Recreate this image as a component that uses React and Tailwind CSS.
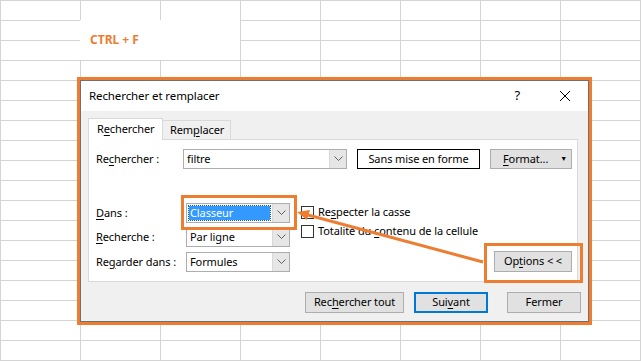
import React from 'react'

const FONT = { fontFamily: '"Segoe UI", "Noto Sans", sans-serif' }

function U({ children }) {
    return <span className="underline underline-offset-[2px] decoration-[1px]">{children}</span>
}

function Chevron() {
    return (
        <svg width="9" height="6" viewBox="0 0 9 6" className="text-[#606060]">
            <path d="M0.5 0.5 L4.5 4.5 L8.5 0.5" fill="none" stroke="currentColor" strokeWidth="1" />
        </svg>
    )
}

function Combo({ width, children, selected = false }) {
    return (
        <div className={`flex h-[20px] border border-[#adadad] bg-white ${width}`}>
            <div className="flex flex-1 items-center px-[2px]">
                {selected ? (
                    <span className="flex h-[14px] w-full items-center bg-[#3399ff] px-[1px] text-white outline outline-1 outline-dotted outline-[#1a5fb4]">
                        {children}
                    </span>
                ) : (
                    <span className="pl-[1px]">{children}</span>
                )}
            </div>
            <div className="flex w-[17px] items-center justify-center border-l border-[#d9d9d9] bg-[#e6e6e6]">
                <Chevron />
            </div>
        </div>
    )
}

function Checkbox({ children }) {
    return (
        <div className="flex h-[19px] items-center whitespace-nowrap">
            <div className="h-[13px] w-[13px] border border-[#333] bg-white" />
            <span className="ml-[4px]">{children}</span>
        </div>
    )
}

function Button({ className = '', children }) {
    return (
        <div className={`flex h-[21px] items-center justify-center border border-[#adadad] bg-[#e1e1e1] ${className}`}>
            {children}
        </div>
    )
}

export default function App() {
    const cells = Array.from({ length: 9 * 19 })

    return (
        <div className="relative h-[361px] w-[641px] overflow-hidden bg-white text-[11px] tracking-[-0.1px] text-black" style={FONT}>
            {/* spreadsheet grid */}
            <div className="grid grid-cols-[repeat(9,80px)] auto-rows-[20px]">
                {cells.map((_, i) => (
                    <div key={i} className="border-l border-t border-[#d4d4d4]" />
                ))}
            </div>

            {/* merged cell with shortcut */}
            <div className="absolute left-[80px] top-[20px] flex h-[40px] w-[160px] items-center bg-white pl-[10px] text-[12px] font-bold tracking-normal text-[#ed7d31]">
                CTRL + F
            </div>

            {/* dialog window */}
            <div className="absolute left-[77px] top-[77px] w-[515px] whitespace-nowrap border-[3px] border-[#ed7d31]">
                <div className="flex flex-col border border-[#707070]">
                    <div className="flex h-[30px] items-center bg-white pl-[8px]">
                        <span className="text-[11.5px]">Rechercher et remplacer</span>
                        <span className="ml-auto mr-[39px] text-[13px]">?</span>
                        <svg width="12" height="12" viewBox="0 0 12 12" className="mr-[17px]">
                            <path d="M1 1 L11 11 M11 1 L1 11" stroke="#000" strokeWidth="1" />
                        </svg>
                    </div>

                    <div className="flex flex-col bg-[#f0f0f0] px-[7px] pb-[8px] pt-[7px]">
                        <div className="flex h-[21px] items-end">
                            <div className="relative z-10 -mb-px flex h-[22px] w-[75px] items-center border border-b-0 border-[#d9d9d9] bg-white pl-[8px]">
                                R<U>e</U>chercher
                            </div>
                            <div className="flex h-[19px] w-[68px] items-center border border-l-0 border-b-0 border-[#d9d9d9] pl-[7px]">
                                Rem<U>p</U>lacer
                            </div>
                        </div>

                        <div className="flex h-[143px] w-[490px] flex-col border border-[#d9d9d9] bg-white pl-[7px] pt-[9px]">
                            <div className="flex h-[20px] items-center">
                                <span className="w-[87px]">Re<U>c</U>hercher :</span>
                                <Combo width="w-[164px]">filtre</Combo>
                                <div className="ml-[10px] flex h-[20px] w-[123px] items-center justify-center border border-black">
                                    Sans mise en forme
                                </div>
                                <div className="ml-[10px] flex h-[20px] w-[82px] items-center border border-[#adadad] bg-[#e1e1e1] pl-[12px]">
                                    <span><U>F</U>ormat...</span>
                                    <span className="ml-auto mr-[4px] text-[7px]">▼</span>
                                </div>
                            </div>

                            <div className="mt-[34px] flex">
                                <div className="flex flex-col">
                                    <div className="flex h-[20px] items-center">
                                        <span className="w-[90px]"><U>D</U>ans :</span>
                                        <Combo width="w-[104px]" selected>Classeur</Combo>
                                    </div>
                                    <div className="mt-[4px] flex h-[20px] items-center">
                                        <span className="w-[90px]"><U>R</U>echerche :</span>
                                        <Combo width="w-[104px]">Par ligne</Combo>
                                    </div>
                                    <div className="mt-[5px] flex h-[20px] items-center">
                                        <span className="w-[90px]">Re<U>g</U>arder dans :</span>
                                        <Combo width="w-[104px]">Formules</Combo>
                                    </div>
                                </div>
                                <div className="ml-[11px] flex flex-col">
                                    <Checkbox>Re<U>s</U>pecter la casse</Checkbox>
                                    <Checkbox>Totalité du <U>c</U>ontenu de la cellule</Checkbox>
                                </div>
                                <div className="ml-auto mr-[5px] flex flex-col justify-end">
                                    <Button className="w-[78px]">Op<U>t</U>ions &lt; &lt;</Button>
                                </div>
                            </div>
                        </div>

                        <div className="mt-[10px] flex justify-end">
                            <Button className="w-[99px]">Rec<U>h</U>ercher tout</Button>
                            <div className="ml-[10px] flex h-[21px] w-[74px] items-center justify-center border-2 border-[#0078d7] bg-[#e1e1e1]">
                                Sui<U>v</U>ant
                            </div>
                            <Button className="ml-[19px] w-[74px]">Fermer</Button>
                        </div>
                    </div>
                </div>
            </div>

            {/* annotations */}
            <div className="absolute left-[181px] top-[195px] h-[35px] w-[116px] border-[3px] border-[#ed7d31]" />
            <div className="absolute left-[484px] top-[243px] h-[40px] w-[99px] border-[3px] border-[#ed7d31]" />
            <svg className="pointer-events-none absolute left-0 top-0" width="641" height="361">
                <line x1="483" y1="262" x2="308" y2="215" stroke="#ed7d31" strokeWidth="3" />
                <polygon points="297,212 310,210 307,220" fill="#ed7d31" />
            </svg>
        </div>
    )
}
